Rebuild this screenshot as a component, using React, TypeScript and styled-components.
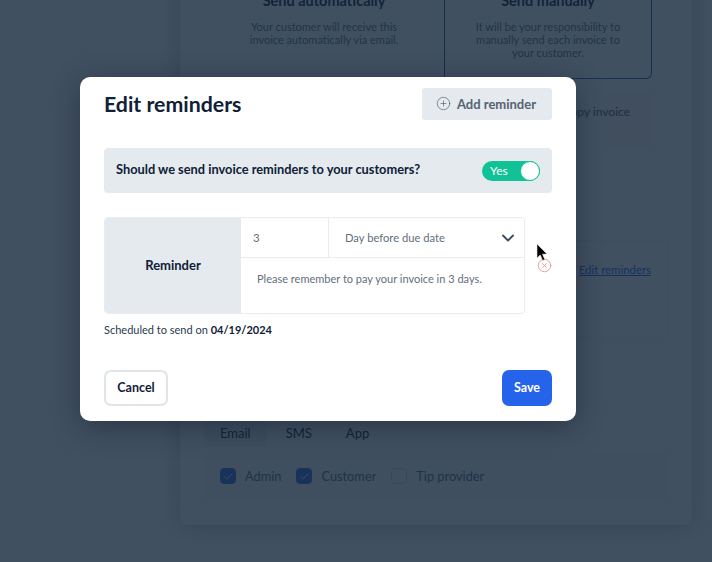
import React from "react";
import styled, { createGlobalStyle } from "styled-components";
import { Check, ChevronDown, CirclePlus, CircleX } from "lucide-react";

const Global = createGlobalStyle`
  html, body { margin: 0; padding: 0; background: #fff; }
  body { font-family: "Lato", "Noto Sans", sans-serif; color: #0f2037; }
`;

/* ---------- page behind the dialog ---------- */
const Page = styled.div`
  position: relative;
  width: 712px;
  height: 562px;
  overflow: hidden;
  display: flex;
  flex-direction: column;
  justify-content: flex-end;
  box-sizing: border-box;
  padding: 0 20px 37px 180px;
`;
const Card = styled.section`
  flex: none;
  display: flex;
  flex-direction: column;
  padding: 0 24px 25px;
  border-radius: 8px;
  background: #fff;
  box-shadow: 0 2px 22px rgba(15, 32, 55, 0.3);
`;
const SendRow = styled.div`
  display: flex;
  padding-right: 16px;
`;
const SendOption = styled.div<{ $selected?: boolean; $width: number }>`
  box-sizing: border-box;
  width: ${(p) => p.$width}px;
  padding: 20px 16px 19px;
  text-align: center;
  border-radius: 0 0 6px 0;
  border: 1px solid ${(p) => (p.$selected ? "#2f5fb0" : "transparent")};
  border-top: none;
  border-left-color: ${(p) => (p.$selected ? "#2f4f80" : "transparent")};
`;
const SendTitle = styled.div`
  font-size: 14.5px;
  line-height: 18px;
  font-weight: 700;
  margin-bottom: 10px;
`;
const SendText = styled.div`
  font-size: 11px;
  line-height: 13px;
  color: #5f6d7c;
`;
const CopyRow = styled.div`
  display: flex;
  justify-content: flex-end;
  margin-top: 14px;
  padding-right: 16px;
`;
const CopyBox = styled.div`
  width: 120px;
  height: 54px;
  box-sizing: border-box;
  padding: 12px 22px 0 0;
  font-size: 12px;
  line-height: 14px;
  text-align: right;
  color: #4d5a69;
  background: linear-gradient(to right, transparent 75px, #f7f2f1 75px);
`;
const LinkBox = styled.div`
  margin-top: 93px;
  height: 98px;
  box-sizing: border-box;
  padding: 17px 16px 0 0;
  text-align: right;
  border: 1px solid #f1f3f5;
  border-left: none;
`;
const EditLink = styled.a`
  font-size: 11.4px;
  line-height: 16px;
  color: #2563eb;
  text-decoration: underline;
`;
const Tabs = styled.div`
  display: flex;
  margin-top: 82px;
  height: 27px;
`;
const Tab = styled.div<{ $active?: boolean }>`
  padding: 0 16px;
  margin-right: ${(p) => (p.$active ? "3px" : "2px")};
  font-size: 13px;
  line-height: 27px;
  color: #0f2037;
  background: ${(p) => (p.$active ? "#eff2f5" : "transparent")};
`;
const RolePanel = styled.div`
  margin-top: 5px;
  height: 48px;
  box-sizing: border-box;
  padding: 0 16px;
  display: flex;
  align-items: center;
  gap: 9px;
  background: #f6f8fa;
`;
const RoleBox = styled.span<{ $checked?: boolean }>`
  width: 16px;
  height: 16px;
  box-sizing: border-box;
  border-radius: 4px;
  display: flex;
  align-items: center;
  justify-content: center;
  color: #fff;
  background: ${(p) => (p.$checked ? "#3668d8" : "#f6f8fa")};
  border: 1px solid ${(p) => (p.$checked ? "#3668d8" : "#ccd4db")};
`;
const RoleLabel = styled.span`
  font-size: 12.8px;
  line-height: 16px;
  color: #5f6d7c;
  margin-right: 6px;
`;

/* ---------- dialog ---------- */
const Scrim = styled.div`
  position: absolute;
  inset: 0;
  background: rgba(18, 36, 58, 0.8);
`;
const Dialog = styled.div`
  position: absolute;
  left: 80px;
  top: 77px;
  width: 496px;
  height: 344px;
  box-sizing: border-box;
  padding: 11px 24px 15px;
  display: flex;
  flex-direction: column;
  border-radius: 10px;
  background: #fff;
  box-shadow: 0 6px 28px rgba(15, 25, 40, 0.45);
`;
const Header = styled.header`
  display: flex;
  justify-content: space-between;
  align-items: center;
  height: 32px;
`;
const Title = styled.h1`
  margin: 0;
  font-size: 21.3px;
  line-height: 32px;
  font-weight: 700;
  color: #0f2037;
`;
const AddButton = styled.button`
  width: 130px;
  height: 32px;
  padding: 0 2px 1px 0;
  display: flex;
  align-items: center;
  justify-content: center;
  gap: 6px;
  border: none;
  border-radius: 3px;
  background: #e4eaee;
  color: #566272;
  font: 700 13px "Lato", sans-serif;
`;
const QuestionBar = styled.div`
  margin-top: 28px;
  height: 45px;
  box-sizing: border-box;
  padding: 0 12px;
  display: flex;
  align-items: center;
  justify-content: space-between;
  border-radius: 4px;
  background: #e4eaee;
`;
const Question = styled.span`
  font-size: 12.8px;
  line-height: 16px;
  margin-top: -3px;
  font-weight: 700;
  color: #0f2037;
`;
const Toggle = styled.div`
  position: relative;
  width: 58px;
  height: 20px;
  box-sizing: border-box;
  padding-left: 8px;
  border-radius: 10px;
  background: #12c297;
  color: #fff;
  font-size: 12px;
  line-height: 20px;
`;
const Knob = styled.span`
  position: absolute;
  right: 0;
  top: 0;
  width: 20px;
  height: 20px;
  box-sizing: border-box;
  border: 1.5px solid #12c297;
  border-radius: 50%;
  background: #fff;
`;
const ReminderRow = styled.div`
  margin-top: 24px;
  display: flex;
  align-items: center;
  gap: 12px;
`;
const ReminderTable = styled.div`
  width: 422px;
  height: 97px;
  box-sizing: border-box;
  display: flex;
  overflow: hidden;
  border: 1px solid #e8ecef;
  border-radius: 4px;
`;
const ReminderLabel = styled.div`
  width: 136px;
  flex: none;
  display: flex;
  align-items: center;
  justify-content: center;
  padding-bottom: 1px;
  background: #e4eaee;
  font-size: 13px;
  font-weight: 700;
  color: #0f2037;
`;
const ReminderFields = styled.div`
  flex: 1;
  display: flex;
  flex-direction: column;
`;
const FieldRow = styled.div`
  display: flex;
  height: 39px;
  flex: none;
  border-bottom: 1px solid #e8ecef;
`;
const AmountField = styled.div`
  width: 88px;
  box-sizing: border-box;
  padding-left: 12px;
  border-right: 1px solid #e8ecef;
  font-size: 11.5px;
  line-height: 39px;
  color: #636f7d;
`;
const WhenField = styled.div`
  flex: 1;
  display: flex;
  align-items: center;
  justify-content: space-between;
  padding: 0 6px 0 16px;
  font-size: 11.2px;
  color: #636f7d;
  svg { color: #3c4a5c; }
`;
const Message = styled.div`
  padding: 13px 16px 0;
  font-size: 11px;
  line-height: 16px;
  white-space: nowrap;
  color: #636f7d;
`;
const RemoveIcon = styled.span`
  display: flex;
  color: #ee7d84;
`;
const Scheduled = styled.p`
  margin: 8px 0 0;
  font-size: 11px;
  line-height: 16px;
  color: #2a3a4e;
  strong { font-weight: 700; color: #0f2037; }
`;
const Footer = styled.footer`
  margin-top: auto;
  display: flex;
  justify-content: space-between;
`;
const CancelButton = styled.button`
  width: 64px;
  height: 36px;
  padding: 0 0 1px;
  box-sizing: border-box;
  border: 2px solid #e0e5ea;
  border-radius: 7px;
  background: #fff;
  color: #0f2037;
  font: 700 12.5px "Lato", sans-serif;
`;
const SaveButton = styled.button`
  width: 50px;
  height: 36px;
  padding: 0 0 1px;
  border: none;
  border-radius: 7px;
  background: #2563eb;
  color: #fff;
  font: 700 12.5px "Lato", sans-serif;
`;
const Pointer = styled.svg`
  position: absolute;
  left: 456px;
  top: 166px;
`;

export default function App() {
  return (
    <>
      <Global />
      <Page>
        <Card>
          <SendRow>
            <SendOption $width={240}>
              <SendTitle>Send automatically</SendTitle>
              <SendText>
                Your customer will receive this
                <br />
                invoice automatically via email.
              </SendText>
            </SendOption>
            <SendOption $width={208} $selected>
              <SendTitle>Send manually</SendTitle>
              <SendText>
                It will be your responsibility to
                <br />
                manually send each invoice to
                <br />
                your customer.
              </SendText>
            </SendOption>
          </SendRow>
          <CopyRow>
            <CopyBox>Copy invoice</CopyBox>
          </CopyRow>
          <LinkBox>
            <EditLink>Edit reminders</EditLink>
          </LinkBox>
          <Tabs>
            <Tab $active>Email</Tab>
            <Tab>SMS</Tab>
            <Tab>App</Tab>
          </Tabs>
          <RolePanel>
            <RoleBox $checked>
              <Check size={11} strokeWidth={2} />
            </RoleBox>
            <RoleLabel>Admin</RoleLabel>
            <RoleBox $checked>
              <Check size={11} strokeWidth={2} />
            </RoleBox>
            <RoleLabel>Customer</RoleLabel>
            <RoleBox />
            <RoleLabel>Tip provider</RoleLabel>
          </RolePanel>
        </Card>
        <Scrim />
        <Dialog>
          <Header>
            <Title>Edit reminders</Title>
            <AddButton>
              <CirclePlus size={15} strokeWidth={1.1} />
              Add reminder
            </AddButton>
          </Header>
          <QuestionBar>
            <Question>Should we send invoice reminders to your customers?</Question>
            <Toggle>
              Yes
              <Knob />
            </Toggle>
          </QuestionBar>
          <ReminderRow>
            <ReminderTable>
              <ReminderLabel>Reminder</ReminderLabel>
              <ReminderFields>
                <FieldRow>
                  <AmountField>3</AmountField>
                  <WhenField>
                    Day before due date
                    <ChevronDown size={20} strokeWidth={2.2} />
                  </WhenField>
                </FieldRow>
                <Message>Please remember to pay your invoice in 3 days.</Message>
              </ReminderFields>
            </ReminderTable>
            <RemoveIcon>
              <CircleX size={15} strokeWidth={1.2} />
            </RemoveIcon>
          </ReminderRow>
          <Scheduled>
            Scheduled to send on <strong>04/19/2024</strong>
          </Scheduled>
          <Footer>
            <CancelButton>Cancel</CancelButton>
            <SaveButton>Save</SaveButton>
          </Footer>
          <Pointer width="12" height="20" viewBox="0 0 12 20">
            <path d="M1 1 L1 15 L4.3 12 L6.6 17.5 L8.8 16.5 L6.5 11.2 L11 11 Z" fill="#000" stroke="#e8e8e8" strokeWidth="0.6" />
          </Pointer>
        </Dialog>
      </Page>
    </>
  );
}
